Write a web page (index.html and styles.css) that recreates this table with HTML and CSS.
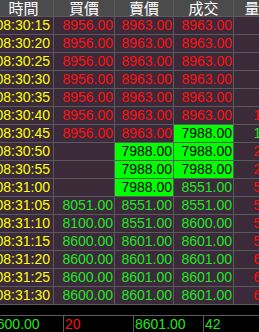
FILE: index.html
```html
<!DOCTYPE html>
<html>
<head>
<meta charset="utf-8">
<link rel="stylesheet" href="styles.css">
</head>
<body>
<div class="screen">
  <div class="grid">
    <div class="hd">時間</div><div class="hd">買價</div><div class="hd">賣價</div><div class="hd">成交</div><div class="hd">量</div>

    <div class="c t">08:30:15</div><div class="c r">8956.00</div><div class="c r">8963.00</div><div class="c r">8963.00</div><div class="c"></div>
    <div class="c t">08:30:20</div><div class="c r">8956.00</div><div class="c r">8963.00</div><div class="c r">8963.00</div><div class="c"></div>
    <div class="c t">08:30:25</div><div class="c r">8956.00</div><div class="c r">8963.00</div><div class="c r">8963.00</div><div class="c"></div>
    <div class="c t">08:30:30</div><div class="c r">8956.00</div><div class="c r">8963.00</div><div class="c r">8963.00</div><div class="c"></div>
    <div class="c t">08:30:35</div><div class="c r">8956.00</div><div class="c r">8963.00</div><div class="c r">8963.00</div><div class="c"></div>
    <div class="c t">08:30:40</div><div class="c r">8956.00</div><div class="c r">8963.00</div><div class="c r">8963.00</div><div class="c r">10</div>
    <div class="c t">08:30:45</div><div class="c r">8956.00</div><div class="c r">8963.00</div><div class="c hl">7988.00</div><div class="c g">10</div>
    <div class="c t">08:30:50</div><div class="c"></div><div class="c hl">7988.00</div><div class="c hl">7988.00</div><div class="c r">20</div>
    <div class="c t">08:30:55</div><div class="c"></div><div class="c hl">7988.00</div><div class="c hl">7988.00</div><div class="c r">20</div>
    <div class="c t">08:31:00</div><div class="c"></div><div class="c hl">7988.00</div><div class="c g">8551.00</div><div class="c r">50</div>
    <div class="c t">08:31:05</div><div class="c g">8051.00</div><div class="c g">8551.00</div><div class="c g">8551.00</div><div class="c r">50</div>
    <div class="c t">08:31:10</div><div class="c g">8100.00</div><div class="c g">8551.00</div><div class="c g">8600.00</div><div class="c r">50</div>
    <div class="c t">08:31:15</div><div class="c g">8600.00</div><div class="c g">8601.00</div><div class="c g">8601.00</div><div class="c r">50</div>
    <div class="c t">08:31:20</div><div class="c g">8600.00</div><div class="c g">8601.00</div><div class="c g">8601.00</div><div class="c r">60</div>
    <div class="c t">08:31:25</div><div class="c g">8600.00</div><div class="c g">8601.00</div><div class="c g">8601.00</div><div class="c r">60</div>
    <div class="c t">08:31:30</div><div class="c g">8600.00</div><div class="c g">8601.00</div><div class="c g">8601.00</div><div class="c r">60</div>
  </div>
  <div class="foot">
    <div class="f g">8600.00</div><div class="f r">20</div><div class="f g">8601.00</div><div class="f g">42</div>
  </div>
</div>
</body>
</html>
```

FILE: styles.css
```css
html, body {
  margin: 0;
  padding: 0;
  background: #000;
}
.screen {
  width: 259px;
  height: 332px;
  overflow: hidden;
  background: #000;
  font-family: "Liberation Sans", "Noto Sans CJK TC", sans-serif;
  font-size: 14px;
}
.grid {
  display: grid;
  grid-template-columns: 59px 60px 58px 59px 36px;
  grid-template-rows: 16px;
  grid-auto-rows: 17px;
  gap: 1px;
  background: #5a5a5a;
  margin-left: -6px;
  width: max-content;
  padding-bottom: 1px;
}
.hd {
  background: #4b4b4b;
  color: #fff;
  text-align: center;
  line-height: 16px;
  height: 16px;
  overflow: hidden;
  font-family: "Noto Sans CJK TC", sans-serif;
  font-size: 15px;
}
.c {
  background: #3a2a3a;
  text-align: right;
  line-height: 17px;
  padding-right: 1px;
  white-space: nowrap;
}
.t {
  color: #ffff00;
  padding-right: 3px;
}
.r {
  color: #ff1010;
}
.g {
  color: #22e622;
}
.hl {
  background: #00ff00;
  color: #000;
}
.foot {
  margin-top: 10px;
  border-top: 1px solid #5a5a5a;
  display: grid;
  grid-template-columns: 75px 69px 69px 69px;
  gap: 1px;
  background: #5a5a5a;
  margin-left: -12px;
  width: max-content;
  height: 16px;
}
.f {
  background: #000;
  line-height: 16px;
  padding-left: 1px;
  white-space: nowrap;
}
```
